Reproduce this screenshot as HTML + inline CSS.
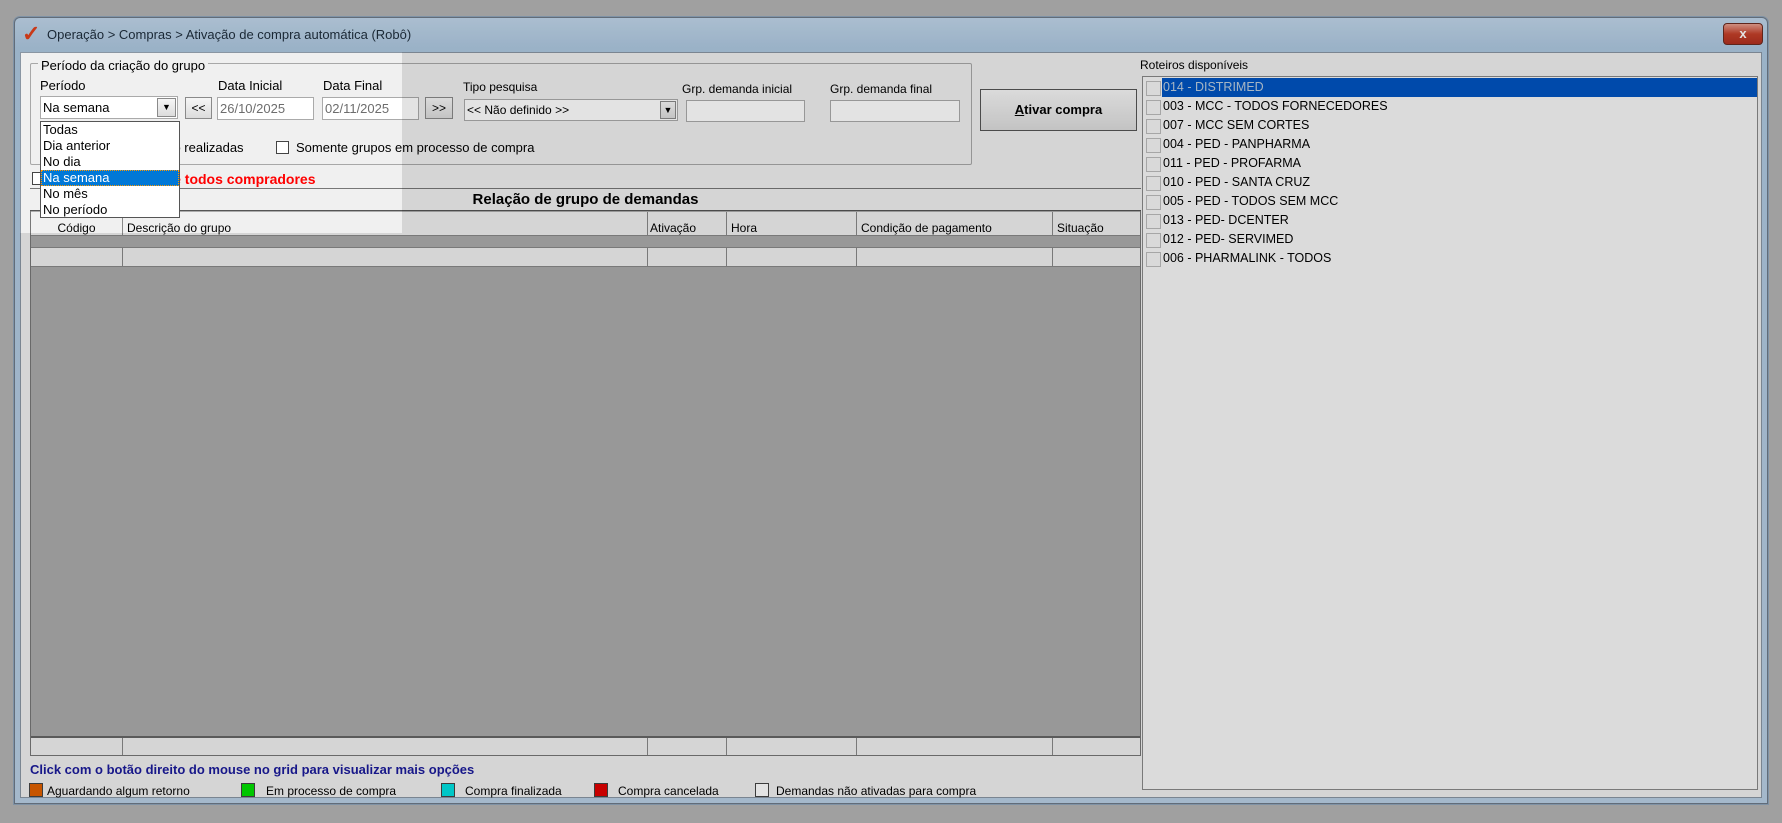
<!DOCTYPE html>
<html><head><meta charset="utf-8"><style>
*{box-sizing:border-box;margin:0;padding:0}
body{width:1782px;height:823px;background:#b4b4b4;position:relative;overflow:hidden;font-family:"Liberation Sans",sans-serif;font-size:12px;color:#000}
.a{position:absolute}
.win{left:14px;top:17px;width:1754px;height:787px;border:1px solid #6d7a88;border-radius:6px 6px 0 0;background:linear-gradient(#c0d6ea,#aec8e0 30px,#b9cfe4);box-shadow:0 0 0 1px #8fa4ba}
.client{left:20px;top:52px;width:1742px;height:746px;background:#f0f0f0;border:1px solid #8a96a3}
.inp{background:#fff;border:1px solid #aaa;color:#6d6d6d;padding:3px 2px;font-size:12px}
.btn{background:linear-gradient(#f6f6f6,#dcdcdc);border:1px solid #8a8a8a;text-align:center}
.cb{width:13px;height:13px;border:1px solid #444;background:#fff}
.grid{left:30px;top:188px;width:1111px;height:568px;background:#ababab;border:1px solid #777}
.col{border-right:1px solid #888}
.dd div{height:16px;line-height:16px;padding-left:2px;font-size:13px}
.li{height:19px;line-height:19px;font-size:12.5px;position:relative;padding-left:20px}
.li:before{content:"";position:absolute;left:3px;top:3px;width:13px;height:13px;border:1px solid #bbb;background:#f4f4f4}
</style></head><body>
<div class="a win"></div>
<div class="a" style="left:22px;top:24px;color:#e2401c;font-size:22px;font-weight:bold;line-height:20px">✓</div>
<div class="a" style="left:47px;top:27px;font-size:13px;color:#1e2d3c">Operação &gt; Compras &gt; Ativação de compra automática (Robô)</div>
<div class="a" style="left:1723px;top:23px;width:40px;height:22px;border-radius:4px;background:linear-gradient(#e8a090,#c4402a 50%,#b03020);border:1px solid #6a2a20;color:#fff;text-align:center;font-weight:bold;font-size:13px;line-height:19px">x</div>
<div class="a client"></div>

<div class="a" style="left:30px;top:63px;width:942px;height:102px;border:1px solid #a8a8a8;border-radius:2px"></div>
<div class="a" style="left:38px;top:58px;background:#f0f0f0;padding:0 3px;font-size:13px">Período da criação do grupo</div>
<div class="a" style="left:40px;top:78px;font-size:13px">Período</div>
<div class="a inp" style="left:40px;top:96px;width:138px;height:23px;color:#000;font-size:13px">Na semana</div>
<div class="a btn" style="left:157px;top:98px;width:19px;height:19px;font-size:9px;line-height:17px">▼</div>
<div class="a btn" style="left:185px;top:97px;width:27px;height:22px;line-height:20px">&lt;&lt;</div>
<div class="a" style="left:218px;top:78px;font-size:13px">Data Inicial</div>
<div class="a inp" style="left:217px;top:97px;width:97px;height:23px;font-size:13px">26/10/2025</div>
<div class="a" style="left:323px;top:78px;font-size:13px">Data Final</div>
<div class="a inp" style="left:322px;top:97px;width:97px;height:23px;font-size:13px">02/11/2025</div>
<div class="a btn" style="left:425px;top:97px;width:28px;height:22px;line-height:20px">&gt;&gt;</div>
<div class="a" style="left:463px;top:80px">Tipo pesquisa</div>
<div class="a inp" style="left:464px;top:99px;width:214px;height:22px;color:#000">&lt;&lt; Não definido &gt;&gt;</div>
<div class="a btn" style="left:660px;top:101px;width:16px;height:18px;font-size:9px;line-height:16px">▼</div>
<div class="a" style="left:682px;top:82px">Grp. demanda inicial</div>
<div class="a inp" style="left:686px;top:100px;width:119px;height:22px"></div>
<div class="a" style="left:830px;top:82px">Grp. demanda final</div>
<div class="a inp" style="left:830px;top:100px;width:130px;height:22px"></div>
<div class="a btn" style="left:980px;top:89px;width:157px;height:42px;line-height:40px;font-weight:bold;font-size:13px;border-color:#555"><u>A</u>tivar compra</div>
<div class="a cb" style="left:40px;top:141px"></div>
<div class="a" style="left:60px;top:140px;font-size:13px">Somente grupos não realizadas</div>
<div class="a cb" style="left:276px;top:141px"></div>
<div class="a" style="left:296px;top:140px;font-size:13px">Somente grupos em processo de compra</div>
<div class="a cb" style="left:32px;top:172px"></div>
<div class="a" style="left:58px;top:171px;font-size:14px;font-weight:bold;color:#f00">Mostrar grupos de todos compradores</div>

<div class="a grid"></div>
<div class="a" style="left:30px;top:189px;width:1111px;height:22px;background:#f0f0f0;border-bottom:1px solid #555;text-align:center;font-weight:bold;font-size:15px;line-height:22px">Relação de grupo de demandas</div>
<div class="a" style="left:31px;top:212px;width:1109px;height:24px;background:#f0f0f0;display:flex;border-bottom:1px solid #888">
<div class="col" style="width:92px;text-align:center;line-height:32px">Código</div>
<div class="col" style="width:525px;padding-left:4px;line-height:32px">Descrição do grupo</div>
<div class="col" style="width:79px;padding-left:2px;line-height:32px">Ativação</div>
<div class="col" style="width:130px;padding-left:4px;line-height:32px">Hora</div>
<div class="col" style="width:196px;padding-left:4px;line-height:32px">Condição de pagamento</div>
<div style="width:87px;padding-left:4px;line-height:32px">Situação</div></div>
<div class="a" style="left:31px;top:247px;width:1109px;height:20px;background:#f0f0f0;display:flex;border:1px solid #888;border-width:1px 0">
<div class="col" style="width:92px"></div><div class="col" style="width:525px"></div><div class="col" style="width:79px"></div><div class="col" style="width:130px"></div><div class="col" style="width:196px"></div></div>
<div class="a" style="left:31px;top:736px;width:1109px;height:19px;background:#f0f0f0;display:flex;border-top:2px solid #666">
<div class="col" style="width:92px"></div><div class="col" style="width:525px"></div><div class="col" style="width:79px"></div><div class="col" style="width:130px"></div><div class="col" style="width:196px"></div></div>
<div class="a" style="left:30px;top:762px;color:#1a1a9a;font-weight:bold;font-size:13px">Click com o botão direito do mouse no grid para visualizar mais opções</div>
<div class="a" style="left:29px;top:783px;width:14px;height:14px;background:#e06000;border:1px solid #444"></div><div class="a" style="left:47px;top:784px">Aguardando algum retorno</div>
<div class="a" style="left:241px;top:783px;width:14px;height:14px;background:#00e000;border:1px solid #444"></div><div class="a" style="left:266px;top:784px">Em processo de compra</div>
<div class="a" style="left:441px;top:783px;width:14px;height:14px;background:#00e0e0;border:1px solid #444"></div><div class="a" style="left:465px;top:784px">Compra finalizada</div>
<div class="a" style="left:594px;top:783px;width:14px;height:14px;background:#e00000;border:1px solid #444"></div><div class="a" style="left:618px;top:784px">Compra cancelada</div>
<div class="a" style="left:755px;top:783px;width:14px;height:14px;background:#fff;border:1px solid #444"></div><div class="a" style="left:776px;top:784px">Demandas não ativadas para compra</div>

<div class="a" style="left:1140px;top:58px">Roteiros disponíveis</div>
<div class="a" style="left:1142px;top:76px;width:616px;height:714px;background:#f7f7f7;border:1px solid #888;padding-top:1px">
<div class="li" style="background:linear-gradient(90deg,transparent 19px,#0054c0 19px);color:#bcd">014 - DISTRIMED</div>
<div class="li">003 - MCC - TODOS FORNECEDORES</div>
<div class="li">007 - MCC SEM CORTES</div>
<div class="li">004 - PED - PANPHARMA</div>
<div class="li">011 - PED - PROFARMA</div>
<div class="li">010 - PED - SANTA CRUZ</div>
<div class="li">005 - PED - TODOS SEM MCC</div>
<div class="li">013 - PED- DCENTER</div>
<div class="li">012 - PED- SERVIMED</div>
<div class="li">006 - PHARMALINK - TODOS</div>
</div>

<div class="a" style="left:20px;top:52px;width:382px;height:181px;box-shadow:0 0 0 3000px rgba(0,0,0,0.11)"></div>

<div class="a dd" style="left:40px;top:121px;width:140px;height:97px;background:#fff;border:1px solid #555">
<div>Todas</div><div>Dia anterior</div><div>No dia</div>
<div style="background:#0078d7;color:#fff;outline:1px dotted #f90;outline-offset:-1px">Na semana</div>
<div>No mês</div><div>No período</div></div>
</body></html>
